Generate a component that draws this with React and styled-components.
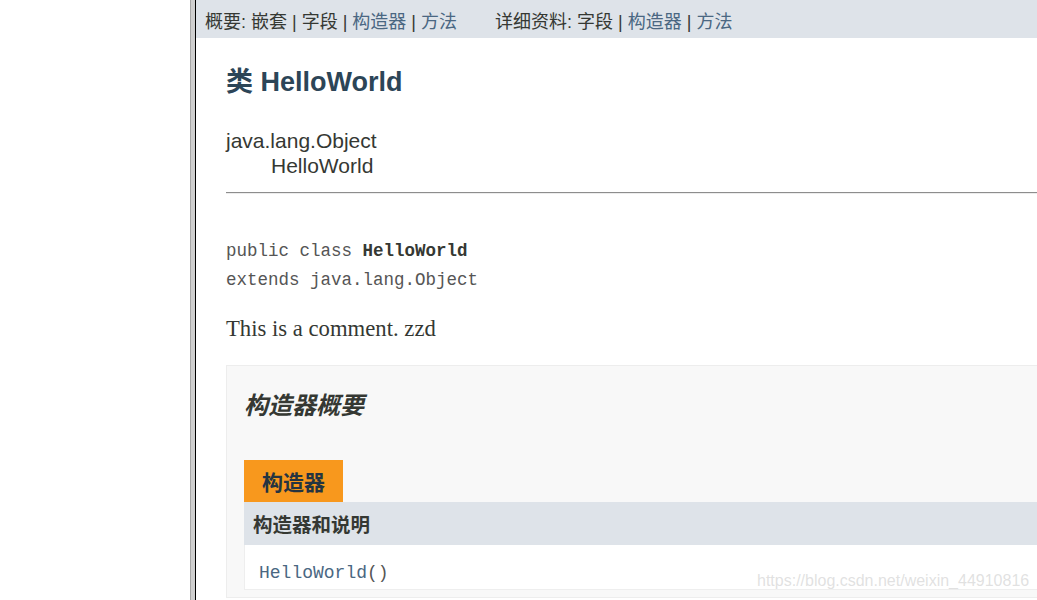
import React from 'react';
import styled, { createGlobalStyle } from 'styled-components';

const GlobalStyle = createGlobalStyle`
  html, body {
    margin: 0;
    padding: 0;
    background: #ffffff;
  }
  body {
    font-family: "Liberation Sans", Arial, "Noto Sans CJK SC", sans-serif;
    color: #353833;
  }
`;

const Page = styled.div`
  display: flex;
  height: 600px;
  overflow: hidden;
  position: relative;
`;

const SidePane = styled.div`
  width: 190px;
  flex: none;
  background: #ffffff;
`;

const Splitter = styled.div`
  width: 6px;
  flex: none;
  background: #cfcfcf;
  border-left: 1px solid #a6a6a6;
  border-right: 1px solid #000000;
  box-sizing: border-box;
`;

const Main = styled.div`
  flex: 1;
  min-width: 0;
  overflow: hidden;
  display: flex;
  flex-direction: column;
`;

const SubNav = styled.div`
  height: 38px;
  background: #dee3e9;
  display: flex;
  align-items: center;
  gap: 38px;
  padding: 2px 0 0 9px;
  box-sizing: border-box;
  font-family: "Liberation Sans", Arial, "Noto Sans CJK SC", sans-serif;
  font-size: 18px;
  color: #353833;
  white-space: nowrap;
`;

const NavGroup = styled.div`
  display: block;
`;

const NavLink = styled.a`
  color: #4a6782;
  text-decoration: none;
`;

const Content = styled.div`
  padding-left: 30px;
  display: flex;
  flex-direction: column;
`;

const Title = styled.h1`
  margin: 28px 0 0;
  font-size: 27px;
  line-height: 32px;
  font-weight: bold;
  color: #2c4557;
  font-family: "Liberation Sans", Arial, "Noto Sans CJK SC", sans-serif;
`;

const Inheritance = styled.div`
  margin-top: 30px;
  font-size: 21px;
  line-height: 25px;
  color: #353833;
`;

const InheritChild = styled.div`
  padding-left: 45px;
`;

const Rule = styled.hr`
  margin: 14px -20px 0 0;
  border: none;
  border-top: 1px solid #8d8d8d;
  border-bottom: 1px solid #ececec;
  height: 0;
`;

const Signature = styled.pre`
  margin: 43px 0 0;
  font-family: "Liberation Mono", "Courier New", monospace;
  font-size: 17.5px;
  line-height: 29px;
  color: #555555;
`;

const SigName = styled.b`
  color: #353833;
`;

const Comment = styled.p`
  margin: 20px 0 0;
  font-family: "Liberation Serif", "Times New Roman", serif;
  font-size: 22.7px;
  line-height: 28px;
  color: #353833;
`;

const SummaryBlock = styled.div`
  margin: 22px -20px 0 0;
  background: #f8f8f8;
  border: 1px solid #ededed;
  padding: 22px 0 7px 17px;
`;

const SummaryHeading = styled.h3`
  margin: 0;
  font-size: 24px;
  line-height: 32px;
  font-style: italic;
  font-weight: bold;
  color: #353833;
  font-family: "Noto Sans CJK SC", sans-serif;
`;

const Table = styled.div`
  margin-top: 40px;
  display: flex;
  flex-direction: column;
`;

const Caption = styled.div`
  align-self: flex-start;
  background: #f8981d;
  height: 42px;
  padding: 0 18px;
  display: flex;
  align-items: center;
  font-family: "Noto Sans CJK SC", sans-serif;
  font-size: 21px;
  font-weight: bold;
  color: #253441;
`;

const HeaderRow = styled.div`
  height: 43px;
  background: #dee3e9;
  display: flex;
  align-items: center;
  padding-left: 9px;
  font-family: "Noto Sans CJK SC", sans-serif;
  font-size: 19.5px;
  font-weight: bold;
  color: #353833;
`;

const DataRow = styled.div`
  height: 45px;
  background: #ffffff;
  border-left: 1px solid #eeeeee;
  border-bottom: 1px solid #eeeeee;
  box-sizing: border-box;
  display: flex;
  align-items: center;
  padding: 12px 0 0 14px;
  font-family: "Liberation Mono", "Courier New", monospace;
  font-size: 18px;
`;

const CodeLink = styled.a`
  color: #4a6782;
  text-decoration: none;
`;

const Parens = styled.span`
  color: #555555;
`;

const Watermark = styled.div`
  position: absolute;
  left: 757px;
  top: 572px;
  font-family: "Liberation Sans", Arial, sans-serif;
  font-size: 16px;
  color: rgba(200, 200, 200, 0.55);
  text-shadow: 0 0 1px rgba(255, 255, 255, 0.8);
  white-space: nowrap;
  pointer-events: none;
`;

export default function App() {
  return (
    <>
      <GlobalStyle />
      <Page>
        <SidePane />
        <Splitter />
        <Main>
          <SubNav>
            <NavGroup>
              概要: 嵌套 | 字段 | <NavLink>构造器</NavLink> | <NavLink>方法</NavLink>
            </NavGroup>
            <NavGroup>
              详细资料: 字段 | <NavLink>构造器</NavLink> | <NavLink>方法</NavLink>
            </NavGroup>
          </SubNav>
          <Content>
            <Title>类 HelloWorld</Title>
            <Inheritance>
              java.lang.Object
              <InheritChild>HelloWorld</InheritChild>
            </Inheritance>
            <Rule />
            <Signature>
              public class <SigName>HelloWorld</SigName>
              {'\n'}extends java.lang.Object
            </Signature>
            <Comment>This is a comment. zzd</Comment>
            <SummaryBlock>
              <SummaryHeading>构造器概要</SummaryHeading>
              <Table>
                <Caption>构造器</Caption>
                <HeaderRow>构造器和说明</HeaderRow>
                <DataRow>
                  <CodeLink>HelloWorld</CodeLink>
                  <Parens>()</Parens>
                </DataRow>
              </Table>
            </SummaryBlock>
          </Content>
        </Main>
        <Watermark>https://blog.csdn.net/weixin_44910816</Watermark>
      </Page>
    </>
  );
}
